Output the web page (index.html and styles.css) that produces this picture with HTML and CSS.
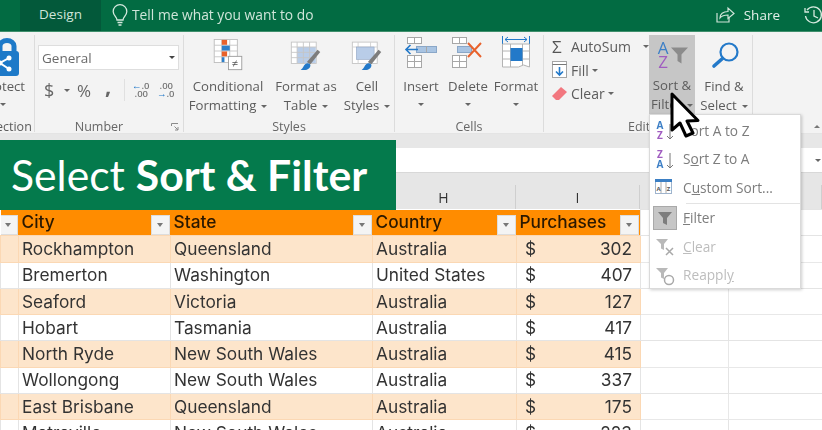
FILE: index.html
```html
<!DOCTYPE html>
<html lang="en">
<head>
<meta charset="utf-8">
<title>Select Sort &amp; Filter</title>
<link rel="stylesheet" href="styles.css">
</head>
<body>
<div class="app">
  <header class="titlebar">
    <div class="tab-design">Design</div>
    <div class="tell">
      <svg class="bulb" width="16" height="24" viewBox="0 0 16 24" fill="none" stroke="#d5e9de" stroke-width="1.3"><path d="M5 17c0-3-3.800-4.600-3.800-8.600a6.800 6.800 0 0 1 13.600 0c0 4-3.800 5.600-3.800 8.600z"/><path d="M5.500 19.500h5M6.500 22h3"/></svg>
      <span>Tell me what you want to do</span>
    </div>
    <div class="share">
      <svg width="19" height="18" viewBox="0 0 19 18" fill="none" stroke="#cfe3d8" stroke-width="1.2"><path d="M1 7v9h12v-4"/><path d="M4 12c0-4 3-6.500 8-6.500V2l6 5.500-6 5V9c-3 0-6 .5-8 3z"/></svg>
      <span>Share</span>
    </div>
    <svg class="history" width="20" height="20" viewBox="0 0 20 20" fill="none" stroke="#d5e9de" stroke-width="1.3"><path d="M3 5a8 8 0 1 1-1.500 6"/><path d="M1 3v4h4M10 5v6l4 2"/></svg>
  </header>

  <section class="ribbon">
    <div class="group g-protect">
      <div class="g-body">
        <svg class="lock" width="20" height="39" viewBox="0 0 20 39"><path d="M0 16V9c0-3 3-5.500 7-5.500s7 2.500 7 5.500v7" fill="none" stroke="#1d79c8" stroke-width="5"/><rect x="-8" y="14" width="27" height="25" rx="3" fill="#1d79c8"/><path d="M0 26l9-5M0 26l9 6" stroke="#fff" stroke-width="2" fill="none"/><circle cx="9" cy="21" r="2.500" fill="#fff"/><circle cx="9" cy="32" r="2.500" fill="#fff"/><circle cx="0" cy="26" r="2.500" fill="#fff"/></svg>
        <div class="lbl protect-l">otect</div>
        <div class="caret-row protect-c"><i class="caret"></i></div>
      </div>
      <div class="g-label left prot-g">ection</div>
    </div>

    <div class="group g-number">
      <div class="g-body">
        <div class="select"><span>General</span><i class="caret dark"></i></div>
        <div class="num-tools">
          <span class="t-dollar">$</span><i class="caret t-caret"></i>
          <span class="t-pct">%</span>
          <span class="t-comma">,</span>
          <b class="t-sep"></b>
          <div class="dec"><em><u>←</u>.0</em><em>.00</em></div>
          <div class="dec"><em>.00</em><em><u>→</u>.0</em></div>
        </div>
      </div>
      <div class="g-label num-g">Number<svg class="launch" width="8" height="8" viewBox="0 0 8 8" fill="none" stroke="#8a8a8a"><path d="M.5 3V.5H7M3.500 3.500L7 7M7 4v3H4"/></svg></div>
    </div>

    <div class="group g-styles">
      <div class="g-body big-row">
        <div class="big w-cond">
          <svg width="34" height="36" viewBox="0 0 34 36"><rect x="1.500" y=".5" width="26" height="26" fill="#fff" stroke="#bcbcbc"/><path d="M1.500 7h26M1.500 13.500h26M1.500 20h26M10 .5v26M19 .5v26" stroke="#c4c4c4"/><rect x="10" y="1" width="6" height="5.500" fill="#e8622c"/><rect x="10" y="7.500" width="9" height="5.500" fill="#2d7fc9"/><rect x="10" y="14" width="6" height="5.500" fill="#e8622c"/><rect x="10" y="20.500" width="3" height="5.500" fill="#2d7fc9"/><rect x="17.500" y="19.500" width="15" height="15" fill="#fff" stroke="#9b9b9b"/><text x="25" y="31.500" text-anchor="middle" class="ne">≠</text></svg>
          <div class="lbl">Conditional</div>
          <div class="lbl">Formatting<i class="caret"></i></div>
        </div>
        <div class="big w-fmt">
          <svg width="34" height="36" viewBox="0 0 34 36"><rect x=".5" y="3.500" width="28" height="24" fill="#fff" stroke="#c4c4c4"/><rect x="7" y="9" width="21" height="18" fill="#b9cde8"/><path d="M.5 9h28M.5 15h28M.5 21h28M7 3.500v24M14 3.500v24M21 3.500v24" stroke="#c6c6c6"/><path d="M18 26l12-14 3 2.500-11 14z" fill="#7d7d7d"/><path d="M11 35c5 0 10 0 11-5 0-3-4-3.500-6-1.500-2 2-2 4-5 6.500z" fill="#2379c9"/></svg>
          <div class="lbl">Format as</div>
          <div class="lbl">Table<i class="caret"></i></div>
        </div>
        <div class="big w-cell">
          <svg width="34" height="36" viewBox="0 0 34 36"><rect x=".5" y="3.500" width="28" height="24" fill="#fff" stroke="#c4c4c4"/><path d="M.5 9h28M7 3.500v24M21 3.500v24" stroke="#d0d0d0"/><rect x="5" y="9" width="20" height="14" fill="#b9cde8" stroke="#8c9fbd" stroke-width=".6"/><path d="M18 26l12-14 3 2.500-11 14z" fill="#7d7d7d"/><path d="M11 35c5 0 10 0 11-5 0-3-4-3.500-6-1.500-2 2-2 4-5 6.500z" fill="#2379c9"/></svg>
          <div class="lbl">Cell</div>
          <div class="lbl">Styles<i class="caret"></i></div>
        </div>
      </div>
      <div class="g-label">Styles</div>
    </div>

    <div class="group g-cells">
      <div class="g-body big-row">
        <div class="big w-ins">
          <svg width="34" height="36" viewBox="0 0 34 36" fill="#fff" stroke="#a7a7a7"><rect x="3.500" y="2.500" width="14" height="6"/><path d="M10.500 2.500v6"/><rect x="3.500" y="20.500" width="14" height="12"/><path d="M3.500 26.500h14M10.500 20.500v12"/><rect x="12.500" y="11.500" width="20" height="6" fill="#a9c4e2" stroke="#8aa7c8"/><path d="M22.500 11.500v6"/><path d="M14 14.500H2M6.500 10L2 14.500 6.500 19" fill="none" stroke="#2379c9" stroke-width="1.600"/></svg>
          <div class="lbl">Insert</div>
          <div class="caret-row"><i class="caret"></i></div>
        </div>
        <div class="big w-del">
          <svg width="34" height="36" viewBox="0 0 34 36" fill="#fff" stroke="#a7a7a7"><rect x="1.500" y="2.500" width="14" height="6"/><path d="M8.500 2.500v6"/><rect x="1.500" y="20.500" width="14" height="12"/><path d="M1.500 26.500h14M8.500 20.500v12"/><rect x="6.500" y="11.500" width="14" height="6" fill="#a9c4e2" stroke="#8aa7c8"/><path d="M17 8l13 14M30 8L17 22" stroke="#e8622c" stroke-width="2" fill="none"/></svg>
          <div class="lbl">Delete</div>
          <div class="caret-row"><i class="caret"></i></div>
        </div>
        <div class="big w-form">
          <svg width="34" height="36" viewBox="0 0 34 36" fill="none" stroke="#b4b4b4"><path d="M3.500 1v8M30.500 1v8" stroke="#2379c9"/><path d="M6 4.500h22M9 2l-3 2.500L9 7M25 2l3 2.500L25 7" stroke="#2379c9"/><path d="M3.500 9h27v23l-6-2-5 2H3.500zM3.500 16h27M3.500 24h27M11.500 9v23M23.500 9v21" fill="#fff"/><rect x="11.500" y="13" width="12" height="13" fill="#2379c9" stroke="none"/></svg>
          <div class="lbl">Format</div>
          <div class="caret-row"><i class="caret"></i></div>
        </div>
      </div>
      <div class="g-label">Cells</div>
    </div>

    <div class="group g-edit">
      <div class="g-body edit-row">
        <div class="edit-list">
          <div class="e-item"><span class="sigma">Σ</span><span>AutoSum</span><i class="caret e-far"></i></div>
          <div class="e-item"><svg width="15" height="18" viewBox="0 0 15 18" fill="#fff" stroke="#a5a5a5"><rect x=".5" y=".5" width="14" height="16"/><path d="M.5 3.500h14" stroke="#777"/><path d="M7.500 6v8M4 10.500l3.500 3.500 3.500-3.500" fill="none" stroke="#2379c9" stroke-width="1.600"/></svg><span>Fill</span><i class="caret"></i></div>
          <div class="e-item"><svg width="15" height="15" viewBox="0 0 15 15"><path d="M0 10L9 1l6 5-8 8H4z" fill="#f2777f"/></svg><span>Clear</span><i class="caret"></i></div>
        </div>
        <div class="big sort-btn">
          <svg width="34" height="34" viewBox="0 0 34 34"><text x="6" y="16" text-anchor="middle" class="az a">A</text><text x="6" y="30" text-anchor="middle" class="az z">Z</text><path d="M14 9.500h17l-6.500 7v9l-4-2.500v-6.500z" fill="#8b8b8b"/></svg>
          <div class="lbl">Sort &amp;</div>
          <div class="lbl">Filter<i class="caret"></i></div>
        </div>
        <div class="big w-find">
          <svg width="34" height="36" viewBox="0 0 34 36" fill="none" stroke="#2379c9"><circle cx="22" cy="17" r="8.500" stroke-width="2.200"/><path d="M15.500 23.500L7 31" stroke-width="3.600" stroke-linecap="round"/></svg>
          <div class="lbl">Find &amp;</div>
          <div class="lbl">Select<i class="caret"></i></div>
        </div>
      </div>
      <div class="g-label left edit-l">Editing</div>
    </div>
    <div class="ribbon-rest"><i class="caret up"></i></div>
  </section>

  <div class="gap-band"></div>
  <div class="formula"><i class="caret f-caret"></i></div>

  <div class="col-heads">
    <div class="ch c0"></div><div class="ch c1"></div><div class="ch c2"></div>
    <div class="ch c3">H</div><div class="ch c4">I</div><div class="ch c5"></div><div class="ch c6"></div>
  </div>

  <table class="sheet">
    <colgroup><col class="c0"><col class="c1"><col class="c2"><col class="c3"><col class="c4"><col class="c5"><col class="c6"></colgroup>
    <tr class="head">
      <th><span class="fbtn"></span></th>
      <th>City<span class="fbtn"></span></th>
      <th>State<span class="fbtn"></span></th>
      <th>Country<span class="fbtn"></span></th>
      <th>Purchases<span class="fbtn"></span></th>
      <td class="blank"></td><td class="blank"></td>
    </tr>
    <tr class="odd"><td></td><td>Rockhampton</td><td>Queensland</td><td>Australia</td><td class="money"><span>$</span><span>302</span></td><td class="blank"></td><td class="blank"></td></tr>
    <tr><td></td><td>Bremerton</td><td>Washington</td><td>United States</td><td class="money"><span>$</span><span>407</span></td><td class="blank"></td><td class="blank"></td></tr>
    <tr class="odd"><td></td><td>Seaford</td><td>Victoria</td><td>Australia</td><td class="money"><span>$</span><span>127</span></td><td class="blank"></td><td class="blank"></td></tr>
    <tr><td></td><td>Hobart</td><td>Tasmania</td><td>Australia</td><td class="money"><span>$</span><span>417</span></td><td class="blank"></td><td class="blank"></td></tr>
    <tr class="odd"><td></td><td>North Ryde</td><td>New South Wales</td><td>Australia</td><td class="money"><span>$</span><span>415</span></td><td class="blank"></td><td class="blank"></td></tr>
    <tr><td></td><td>Wollongong</td><td>New South Wales</td><td>Australia</td><td class="money"><span>$</span><span>337</span></td><td class="blank"></td><td class="blank"></td></tr>
    <tr class="odd"><td></td><td>East Brisbane</td><td>Queensland</td><td>Australia</td><td class="money"><span>$</span><span>175</span></td><td class="blank"></td><td class="blank"></td></tr>
    <tr><td></td><td>Matraville</td><td>New South Wales</td><td>Australia</td><td class="money"><span>$</span><span>223</span></td><td class="blank"></td><td class="blank"></td></tr>
  </table>

  <div class="banner">Select <strong>Sort &amp; Filter</strong></div>

  <div class="menu">
    <div class="m-item"><svg width="24" height="24" viewBox="0 0 24 24"><text x="7" y="11" text-anchor="middle" class="azs a">A</text><text x="7" y="21" text-anchor="middle" class="azs z">Z</text><path d="M17 6v15M14 18l3 3 3-3" fill="none" stroke="#777"/></svg><span>Sort A to Z</span></div>
    <div class="m-item"><svg width="24" height="24" viewBox="0 0 24 24"><text x="7" y="11" text-anchor="middle" class="azs z">Z</text><text x="7" y="21" text-anchor="middle" class="azs a">A</text><path d="M17 6v15M14 18l3 3 3-3" fill="none" stroke="#777"/></svg><span>S<u>o</u>rt Z to A</span></div>
    <div class="m-item"><svg width="24" height="24" viewBox="0 0 24 24"><rect x="2.500" y="5.500" width="16" height="13" fill="#fff" stroke="#9fb4cd"/><rect x="2" y="4" width="17" height="3" fill="#3b7fc4"/><path d="M8 7v11M13 7v11" stroke="#aaa"/><text x="5.500" y="16" class="tiny" text-anchor="middle">A</text><text x="15.500" y="16" class="tiny" text-anchor="middle">Z</text></svg><span>C<u>u</u>stom Sort...</span></div>
    <div class="m-sep"></div>
    <div class="m-item on"><span class="m-box"><svg width="16" height="16" viewBox="0 0 16 16"><path d="M1 2h14L10 8v7L6 13V8z" fill="#7d7d7d"/></svg></span><span><u>F</u>ilter</span></div>
    <div class="m-item off"><svg width="24" height="24" viewBox="0 0 24 24"><path d="M3 5h12L11 10v6l-3-1.500V10z" fill="#b9b9b9"/><path d="M13 14l7 7M20 14l-7 7" stroke="#a9a9a9" stroke-width="1.500"/></svg><span><u>C</u>lear</span></div>
    <div class="m-item off"><svg width="24" height="24" viewBox="0 0 24 24"><path d="M3 5h12L11 10v6l-3-1.500V10z" fill="#b9b9b9"/><circle cx="16" cy="17" r="4.500" fill="none" stroke="#a9a9a9" stroke-width="1.500"/></svg><span>Reappl<u>y</u></span></div>
  </div>

  <svg class="cursor" width="32" height="48" viewBox="0 0 32 48"><path d="M2 2v36l8-7 6 13 7-3-6-12 11-.5z" fill="#fff" stroke="#000" stroke-width="3" stroke-linejoin="round"/></svg>
</div>
</body>
</html>
```
FILE: styles.css
```css
* { box-sizing: border-box; }
html, body { margin: 0; height: 100%; }
body { background: #fff; overflow: hidden; }
.app {
  position: relative; width: 822px; height: 430px; overflow: hidden;
  font-family: "Open Sans", "Noto Sans", sans-serif; color: #555;
  filter: blur(0.5px);
}
.titlebar { height: 32px; background: #026b42; display: flex; align-items: center; color: #cfe5d9; border-bottom: 1px solid #3f8f6c; padding-bottom: 2px; }
.tab-design { width: 81px; margin: -1px 0 -1px 20px; height: 32px; background: #03593a; font-size: 13.500px; line-height: 31px; text-align: center; }
.tell { display: flex; align-items: center; gap: 4px; margin-left: 11px; font-size: 13.800px; }
.share { display: flex; align-items: center; gap: 9px; margin-left: auto; font-size: 13.500px; color: #e3efe9; }
.history { margin-left: 24px; margin-right: -2px; flex: none; }

.ribbon { height: 102px; background: #f3f3f3; display: flex; padding-top: 3px; border-bottom: 1px solid #e4e4e4; }
.group { display: flex; flex-direction: column; border-right: 1px solid #dcdcdc; flex: none; height: 97px; }
.g-body { flex: 1; min-height: 0; }
.g-label { height: 16px; margin-top: 4px; font-size: 12.500px; line-height: 16px; text-align: center; color: #666; position: relative; flex: none; top: 1px; margin-bottom: -2px; }
.g-label.left { text-align: left; }
.g-protect { width: 35px; }
.g-number { width: 149px; }
.g-styles { width: 211px; }
.g-cells { width: 149px; }
.g-edit { width: 209px; }
.ribbon-rest { flex: 1; position: relative; }
.lbl { font-size: 13.200px; line-height: 19px; white-space: nowrap; color: #5c5c5c; }
.caret { display: inline-block; width: 0; height: 0; border: 3px solid transparent; border-top: 3.500px solid #666; border-bottom: 0; margin-left: 5px; vertical-align: middle; }
.caret.dark { border-top-color: #444; margin: 0; }
.caret.up { border-top: 0; border-bottom: 3.500px solid #777; position: absolute; right: 2px; top: 90px; }
.caret-row { height: 19px; line-height: 15px; }
.caret-row .caret { margin: 0; }

.lock { display: block; margin-top: 2px; }
.protect-l { margin: 1px 0 0 -6px; }
.protect-c { text-align: left; }
.prot-g { color: #5c5c5c; margin-left: -4px; }
.num-g { padding-right: 20px; }

.select { margin: 10px 0 0 3px; width: 141px; height: 25px; background: #fff; border: 1px solid #dedede; display: flex; align-items: center; justify-content: space-between; padding: 0 3px; font-size: 13.500px; color: #6a6a6a; }
.num-tools { display: flex; align-items: center; margin: 7px 0 0 9px; height: 26px; color: #666; }
.t-dollar { font-size: 18px; width: 11px; }
.t-caret { margin-left: 9px; }
.t-pct { font-size: 17px; margin-left: 7px; width: 16px; }
.t-comma { font-size: 22px; font-weight: 700; margin: -10px 0 0 12px; width: 8px; }
.t-sep { width: 1px; height: 22px; background: #e0e0e0; margin: 0 7px 0 11px; }
.dec { display: flex; flex-direction: column; width: 16px; margin-right: 9px; font-size: 9.500px; line-height: 8.500px; text-align: right; color: #777; font-weight: 600; white-space: nowrap; }
.dec em { font-style: normal; }
.dec u { text-decoration: none; color: #2379c9; }

.big-row { display: flex; }
.big { display: flex; flex-direction: column; align-items: center; flex: none; }
.big svg { height: 36px; margin-bottom: 6px; flex: none; }
.g-styles .big svg { width: 32px; height: 32px; margin-top: 4px; }
.big .lbl { text-align: center; }
.big > .caret-row { text-align: center; }
.w-cond { width: 88px; }
.w-fmt { width: 74px; margin-left: -3px; }
.w-cell { width: 48px; }
.w-ins { width: 52px; }
.w-del { width: 42px; }
.w-form { width: 54px; }
.w-find { width: 58px; }
.ne { font: 12px "Liberation Sans", sans-serif; fill: #555; }

.edit-row { display: flex; }
.edit-list { width: 105px; padding: 0 0 0 8px; }
.e-item { display: flex; align-items: center; height: 23.500px; gap: 4px; font-size: 14px; color: #5c5c5c; }
.e-item .caret { margin-left: -1px; }
.e-item .e-far { margin-left: 8px; }
.sigma { width: 15px; font-size: 17px; color: #555; }
.sort-btn { width: 46px; height: 79px; background: #c6c6c6; padding-top: 3px; }
.sort-btn svg { width: 34px; height: 34px; margin: 0 0 4px 4px; }
.edit-l { margin-left: 84px; }
.launch { position: absolute; right: 4px; top: 4px; }
.az { font: 400 17px "Open Sans", sans-serif; }
.azs { font: 700 10px "Open Sans", sans-serif; }
.a { fill: #3c7fc6; }
.z { fill: #a05cc0; }
.tiny { font: 700 6px "Open Sans", sans-serif; fill: #555; }

.gap-band { height: 14px; background: #e7e7e7; }
.formula { height: 25px; background: #fff; border-bottom: 1px solid #d8d8d8; position: relative; }
.f-caret { position: absolute; right: 1px; top: 11px; margin: 0; }

.col-heads { height: 36px; display: flex; align-items: flex-end; background: #e6e6e6; }
.ch { flex: none; height: 24px; border-right: 1px solid #cfcfcf; font-size: 14px; line-height: 26px; text-align: center; color: #333; }
.c0 { width: 18px; }
.c1 { width: 152px; }
.c2 { width: 202px; }
.c3 { width: 144px; }
.c4 { width: 124px; }
.c5 { width: 88px; }
.c6 { width: 94px; }

.sheet { border-collapse: collapse; table-layout: fixed; width: 822px; font-family: Inter, "Open Sans", sans-serif; color: #333; font-size: 17.300px; }
.sheet tr { height: 26.300px; }
.sheet td, .sheet th { padding: 0 4px 0 3px; border: 1px solid #e4e4e4; white-space: nowrap; overflow: hidden; font-weight: 400; text-align: left; line-height: 20px; }
.sheet .head th { background: #ff8c00; color: #2a1800; font-weight: 500; font-size: 17.300px; border: 0; position: relative; }
.odd td { background: #fde5cb; border-color: #fbd8b4; }
.odd td.blank { background: #fff; border-color: #e8e8e8; }
.blank { background: #fff; }
.money { padding-left: 8px !important; padding-right: 8px !important; }
.money span { display: inline-block; }
.money span:last-child { float: right; }
.fbtn { position: absolute; right: 1px; top: 5px; width: 19px; height: 20px; background: #f4f4f4; border: 1px solid #ddd; }
.fbtn::after { content: ""; position: absolute; left: 5px; top: 7px; border: 3.500px solid transparent; border-top: 4px solid #777; border-bottom: 0; }

.banner { position: absolute; left: 0; top: 140px; width: 396px; height: 70px; background: #047a4c; color: #fff; font-family: Lato, sans-serif; font-size: 42.700px; line-height: 69px; padding-left: 11px; white-space: nowrap; font-weight: 400; }
.banner strong { font-weight: 700; }

.menu { position: absolute; left: 649px; top: 114px; width: 152px; height: 175px; background: #fff; border: 1px solid #dadada; box-shadow: 1px 1px 3px rgba(0,0,0,.2); padding-top: 1px; }
.m-item { display: flex; align-items: center; height: 28.500px; padding-left: 3px; gap: 6px; font-size: 13.700px; color: #7d7d7d; }
.m-item svg { flex: none; }
.m-sep { height: 1px; margin: 1px 0 0 36px; background: #e3e3e3; }
.m-box { width: 24px; height: 24px; background: #c6c6c6; border: 1px solid #a9a9a9; display: flex; align-items: center; justify-content: center; }
.m-item.off { color: #bdbdbd; }
.cursor { position: absolute; left: 670px; top: 92px; }
```
